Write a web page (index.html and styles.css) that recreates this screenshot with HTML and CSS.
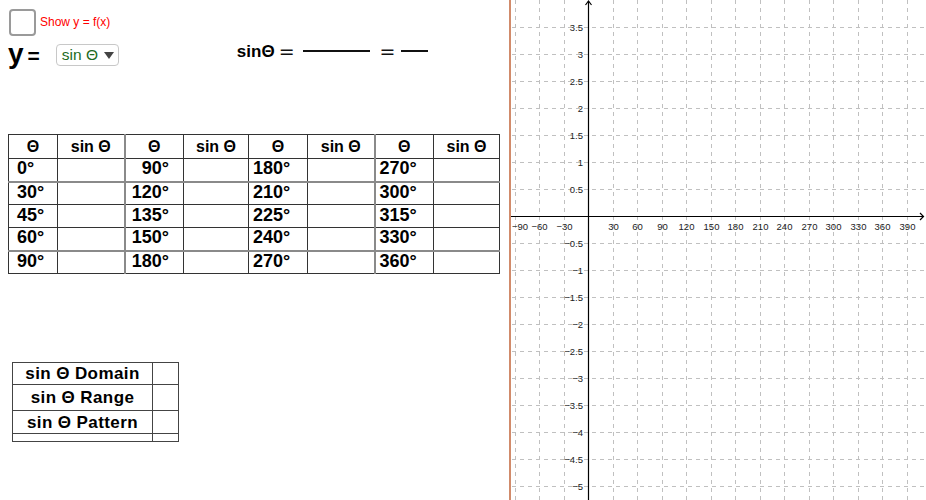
FILE: index.html
```html
<!DOCTYPE html>
<html>
<head>
<meta charset="utf-8">
<link rel="stylesheet" href="styles.css">
</head>
<body>
<div class="app">
  <div class="left">
    <div class="row-check">
      <span class="checkbox"></span>
      <span class="check-label">Show y = f(x)</span>
    </div>
    <div class="row-eq">
      <span class="yeq"><span class="yeq-y">y</span><span class="yeq-eq">=</span></span>
      <span class="dropdown"><span class="dd-text">sin Θ</span><span class="dd-arrow"></span></span>
      <span class="formula">
        <span class="f-sin">sinΘ</span>
        <span class="f-eq">=</span>
        <span class="f-bar f-bar-long"></span>
        <span class="f-eq f-eq2">=</span>
        <span class="f-bar f-bar-short"></span>
      </span>
    </div>
    <table class="values">
      <colgroup>
        <col class="w49"><col class="w67"><col class="w59"><col class="w65">
        <col class="w59"><col class="w67"><col class="w59"><col class="w66">
      </colgroup>
      <tr class="head">
        <th class="t">Θ</th><th>sin Θ</th><th class="t gl">Θ</th><th>sin Θ</th>
        <th class="t">Θ</th><th>sin Θ</th><th class="t gl">Θ</th><th>sin Θ</th>
      </tr>
      <tr>
        <td class="a1">0°</td><td></td><td class="a3 gl">90°</td><td></td>
        <td class="a5">180°</td><td></td><td class="a5 gl">270°</td><td></td>
      </tr>
      <tr class="gt">
        <td class="a1">30°</td><td></td><td class="a3 gl">120°</td><td></td>
        <td class="a5">210°</td><td></td><td class="a5 gl">300°</td><td></td>
      </tr>
      <tr>
        <td class="a1">45°</td><td></td><td class="a3 gl">135°</td><td></td>
        <td class="a5">225°</td><td></td><td class="a5 gl">315°</td><td></td>
      </tr>
      <tr>
        <td class="a1">60°</td><td></td><td class="a3 gl">150°</td><td></td>
        <td class="a5">240°</td><td></td><td class="a5 gl">330°</td><td></td>
      </tr>
      <tr class="gt">
        <td class="a1">90°</td><td></td><td class="a3 gl">180°</td><td></td>
        <td class="a5">270°</td><td></td><td class="a5 gl">360°</td><td></td>
      </tr>
    </table>
    <table class="summary">
      <colgroup><col class="w140"><col class="w26"></colgroup>
      <tr class="r1"><td>sin Θ Domain</td><td></td></tr>
      <tr class="r2"><td>sin Θ Range</td><td></td></tr>
      <tr class="r3"><td>sin Θ Pattern</td><td></td></tr>
      <tr class="r4"><td></td><td></td></tr>
    </table>
  </div>
  <div class="divider"></div>
  <div class="graph">
    <svg width="415" height="500" viewBox="0 0 415 500" xmlns="http://www.w3.org/2000/svg">
      <g class="grid" stroke="#c0c0c0" stroke-width="1" stroke-dasharray="4 4" fill="none">
        <line x1="4.5" y1="0" x2="4.5" y2="500"/>
        <line x1="28.5" y1="0" x2="28.5" y2="500"/>
        <line x1="53.5" y1="0" x2="53.5" y2="500"/>
        <line x1="102.5" y1="0" x2="102.5" y2="500"/>
        <line x1="126.5" y1="0" x2="126.5" y2="500"/>
        <line x1="151.5" y1="0" x2="151.5" y2="500"/>
        <line x1="175.5" y1="0" x2="175.5" y2="500"/>
        <line x1="200.5" y1="0" x2="200.5" y2="500"/>
        <line x1="224.5" y1="0" x2="224.5" y2="500"/>
        <line x1="249.5" y1="0" x2="249.5" y2="500"/>
        <line x1="273.5" y1="0" x2="273.5" y2="500"/>
        <line x1="298.5" y1="0" x2="298.5" y2="500"/>
        <line x1="322.5" y1="0" x2="322.5" y2="500"/>
        <line x1="347.5" y1="0" x2="347.5" y2="500"/>
        <line x1="371.5" y1="0" x2="371.5" y2="500"/>
        <line x1="396.5" y1="0" x2="396.5" y2="500"/>
        <line x1="1" y1="27.5" x2="415" y2="27.5"/>
        <line x1="1" y1="54.5" x2="415" y2="54.5"/>
        <line x1="1" y1="81.5" x2="415" y2="81.5"/>
        <line x1="1" y1="108.5" x2="415" y2="108.5"/>
        <line x1="1" y1="135.5" x2="415" y2="135.5"/>
        <line x1="1" y1="162.5" x2="415" y2="162.5"/>
        <line x1="1" y1="189.5" x2="415" y2="189.5"/>
        <line x1="1" y1="243.5" x2="415" y2="243.5"/>
        <line x1="1" y1="270.5" x2="415" y2="270.5"/>
        <line x1="1" y1="297.5" x2="415" y2="297.5"/>
        <line x1="1" y1="324.5" x2="415" y2="324.5"/>
        <line x1="1" y1="351.5" x2="415" y2="351.5"/>
        <line x1="1" y1="378.5" x2="415" y2="378.5"/>
        <line x1="1" y1="405.5" x2="415" y2="405.5"/>
        <line x1="1" y1="432.5" x2="415" y2="432.5"/>
        <line x1="1" y1="459.5" x2="415" y2="459.5"/>
        <line x1="1" y1="486.5" x2="415" y2="486.5"/>
      </g>
      <g class="axes" stroke="#000" stroke-width="1.2" fill="none">
        <line x1="0" y1="216.5" x2="412.5" y2="216.5"/>
        <line x1="77.5" y1="1" x2="77.5" y2="500"/>
        <polyline points="74.5,5 77.5,1 80.5,5"/>
        <polyline points="409,213 412.5,216.5 409,220"/>
      </g>
      <g class="ylab" font-family="Liberation Sans, Arial, sans-serif" font-size="9.5" fill="#222" text-anchor="end">
        <text x="72" y="31">3.5</text>
        <text x="72" y="58">3</text>
        <text x="72" y="85">2.5</text>
        <text x="72" y="112">2</text>
        <text x="72" y="139">1.5</text>
        <text x="72" y="166">1</text>
        <text x="72" y="193">0.5</text>
        <text x="72" y="247">−0.5</text>
        <text x="72" y="274">−1</text>
        <text x="72" y="301">−1.5</text>
        <text x="72" y="328">−2</text>
        <text x="72" y="355">−2.5</text>
        <text x="72" y="382">−3</text>
        <text x="72" y="409">−3.5</text>
        <text x="72" y="436">−4</text>
        <text x="72" y="463">−4.5</text>
        <text x="72" y="490">−5</text>
      </g>
      <g class="xlab" font-family="Liberation Sans, Arial, sans-serif" font-size="9.5" fill="#222" text-anchor="middle">
        <text x="1" y="229.5" text-anchor="start">−90</text>
        <text x="28.5" y="229.5">−60</text>
        <text x="53.5" y="229.5">−30</text>
        <text x="102.5" y="229.5">30</text>
        <text x="126.5" y="229.5">60</text>
        <text x="151.5" y="229.5">90</text>
        <text x="175.5" y="229.5">120</text>
        <text x="200.5" y="229.5">150</text>
        <text x="224.5" y="229.5">180</text>
        <text x="249.5" y="229.5">210</text>
        <text x="273.5" y="229.5">240</text>
        <text x="298.5" y="229.5">270</text>
        <text x="322.5" y="229.5">300</text>
        <text x="347.5" y="229.5">330</text>
        <text x="371.5" y="229.5">360</text>
        <text x="396.5" y="229.5">390</text>
      </g>
    </svg>
  </div>
</div>
</body>
</html>
```
FILE: styles.css
```css
* { box-sizing: border-box; }
html, body { margin: 0; padding: 0; background: #fff; }
body { font-family: "Liberation Sans", Arial, sans-serif; color: #000; }

.app { display: flex; width: 926px; height: 500px; overflow: hidden; }
.left { width: 509px; flex: none; }
.divider { width: 2px; flex: none; background: #d18b6b; }
.graph { flex: 1; overflow: hidden; }
.graph svg { display: block; }

/* checkbox row */
.row-check { display: flex; align-items: center; height: 36px; padding: 8px 0 0 9px; }
.checkbox { width: 27px; height: 27px; border: 2px solid #9a9a9a; border-radius: 4px; background: #fff; }
.check-label { margin-left: 4px; color: #ff0000; font-size: 12px; }

/* y = dropdown row */
.row-eq { display: flex; align-items: flex-start; height: 24px; margin-top: 8px; padding-left: 8px; }
.yeq { display: flex; align-items: baseline; font-weight: bold; line-height: 1; margin-top: -4px; }
.yeq-y { font-size: 28px; }
.yeq-eq { font-size: 21px; margin-left: 4px; }
.dropdown { display: flex; align-items: center; width: 63px; height: 22px; margin-left: 16px; padding-left: 5px;
  border: 1px solid #c8c8c8; border-radius: 4px; background: #fff; }
.dd-text { color: #1e6b1e; font-size: 15.5px; line-height: 1; }
.dd-arrow { width: 0; height: 0; margin-left: 6px; border-left: 5.5px solid transparent; border-right: 5.5px solid transparent;
  border-top: 7px solid #444; }

.formula { display: flex; align-items: center; height: 17px; margin-left: 118px; margin-top: -1.5px; }
.f-sin { font-weight: bold; font-size: 17px; line-height: 17px; }
.f-eq { font-family: "DejaVu Sans", sans-serif; font-size: 19px; line-height: 17px; margin-left: 4px; color: #111; }
.f-eq2 { margin-left: 10px; }
.f-bar { height: 2px; background: #111; margin-left: 8px; }
.f-bar-long { width: 67px; }
.f-bar-short { width: 27px; margin-left: 6px; }

/* values table */
.values { margin: 66px 0 0 8px; border-collapse: collapse; table-layout: fixed; width: 491px; }
.w49 { width: 49px; } .w67 { width: 67px; } .w59 { width: 59px; } .w65 { width: 65px; } .w66 { width: 66px; }
.values th, .values td { border: 1px solid #333; padding: 0; height: 23px; vertical-align: middle; }
.values .head th { height: 24px; font-size: 16px; font-weight: bold; text-align: center; line-height: 1; }
.values td { font-weight: bold; font-size: 18px; line-height: 1; padding-bottom: 3px; }
.values .a1 { text-align: left; padding-left: 8px; }
.values .a3 { text-align: right; padding-right: 14px; }
.values .a5 { text-align: left; padding-left: 4px; }
.values .gl { border-left: 2px solid #8a8a8a; }
.values .gt td { border-top: 2px solid #8a8a8a; }

/* summary table */
.summary { margin: 88px 0 0 12px; border-collapse: collapse; table-layout: fixed; width: 166px; }
.w140 { width: 140px; } .w26 { width: 26px; }
.summary td { border: 1px solid #444; padding: 0; font-weight: bold; font-size: 17px; text-align: center; line-height: 1; letter-spacing: 0.4px; }
.summary .r1 td { height: 22px; }
.summary .r2 td { height: 26px; }
.summary .r3 td { height: 23px; }
.summary .r4 td { height: 8px; }
```
